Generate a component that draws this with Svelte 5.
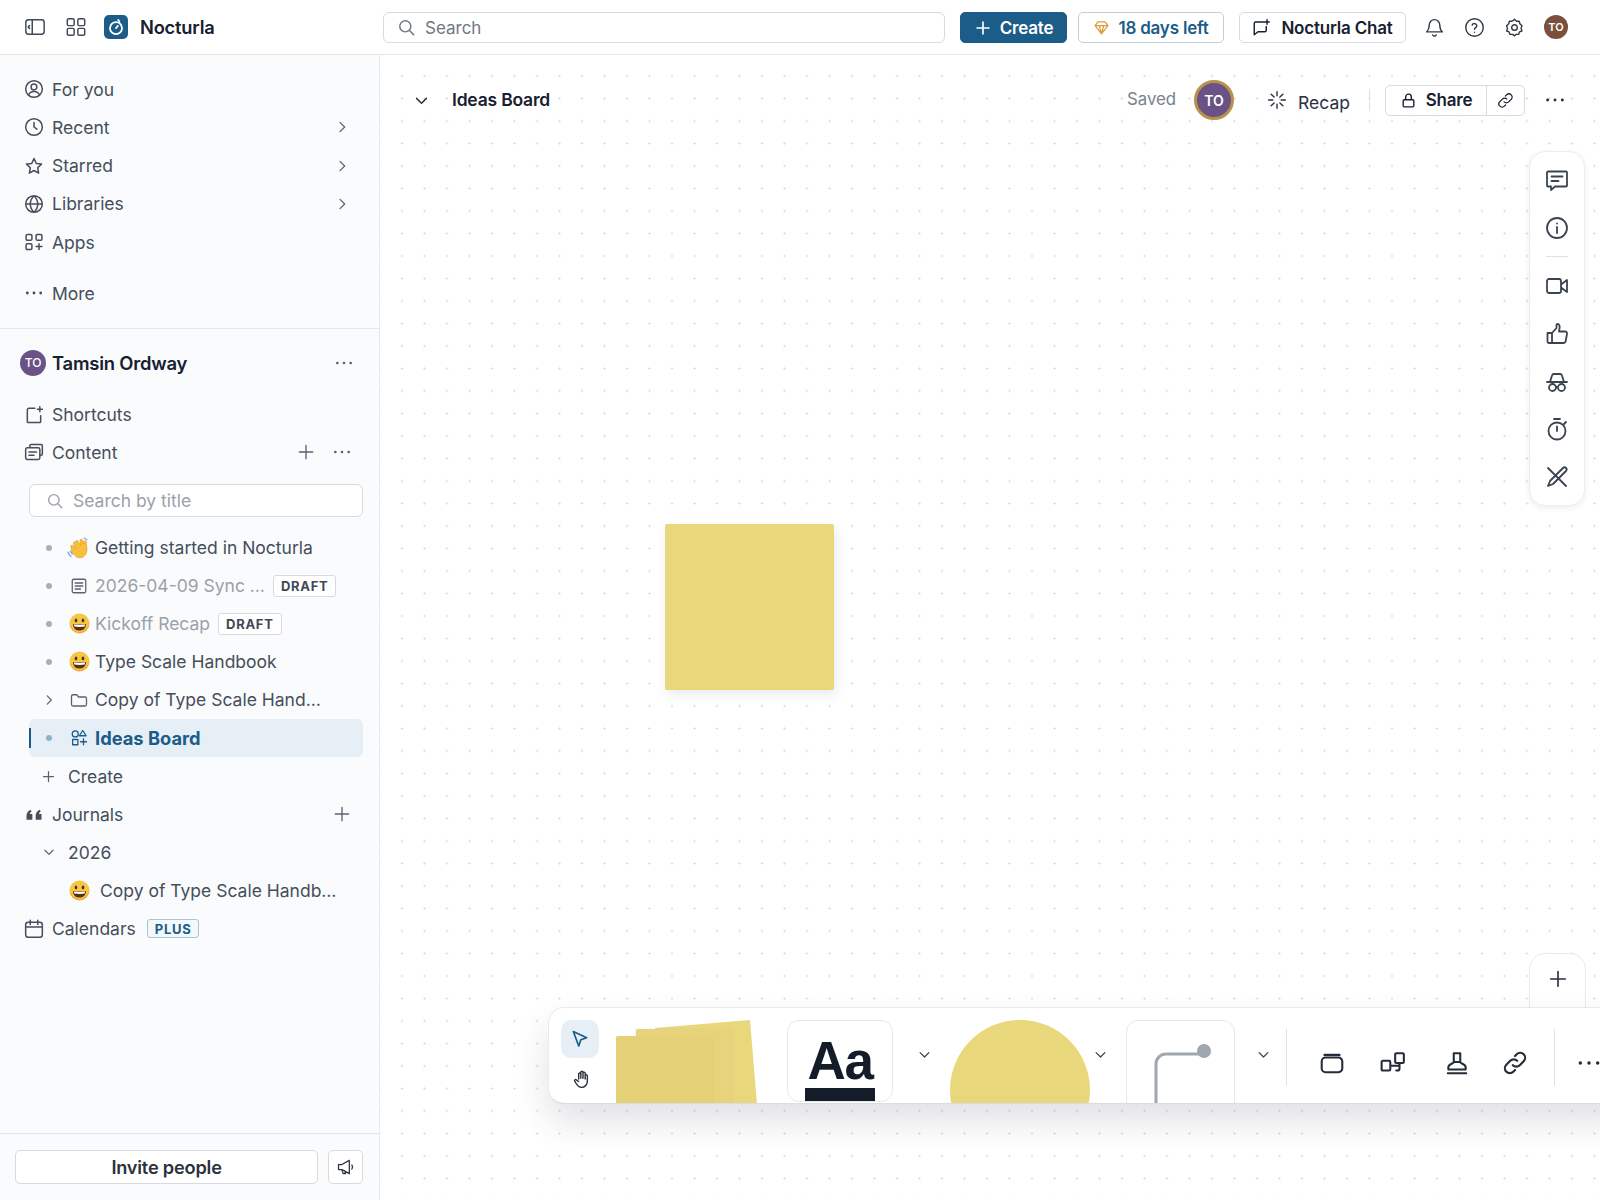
<script lang="ts">
  const c = (x: number, y: number, r: number) =>
    `M${x - r} ${y}a${r} ${r} 0 1 0 ${2 * r} 0a${r} ${r} 0 1 0 ${-2 * r} 0`;

  const icons: Record<string, string> = {
    panel: "M5 4h14a3 3 0 0 1 3 3v10a3 3 0 0 1-3 3H5a3 3 0 0 1-3-3V7a3 3 0 0 1 3-3z M9 4v16 M6 10.5 4.5 12 6 13.5",
    grid: "M4 3h4.5a1.5 1.5 0 0 1 1.5 1.5V9a1.5 1.5 0 0 1-1.5 1.5H4A1.5 1.5 0 0 1 2.500 9V4.500A1.500 1.500 0 0 1 4 3z M15.500 3H20a1.500 1.500 0 0 1 1.500 1.500V9a1.500 1.500 0 0 1-1.500 1.500h-4.500A1.500 1.500 0 0 1 14 9V4.500A1.500 1.500 0 0 1 15.500 3z M4 13.500h4.500A1.500 1.500 0 0 1 10 15v4.500A1.500 1.500 0 0 1 8.500 21H4a1.500 1.500 0 0 1-1.500-1.500V15A1.500 1.500 0 0 1 4 13.500z M15.500 13.500H20a1.500 1.500 0 0 1 1.500 1.500v4.500A1.500 1.500 0 0 1 20 21h-4.500a1.500 1.500 0 0 1-1.500-1.500V15a1.500 1.500 0 0 1 1.500-1.500z",
    search: c(10.5, 10.5, 7) + " M15.800 15.800 21 21",
    user: c(12, 12, 10) + c(12, 9.5, 3.5) + " M5.500 19.500c1-3 3.500-4.500 6.500-4.500s5.500 1.500 6.500 4.500",
    clock: c(12, 12, 10) + " M12 6.500V12l3.500 2.500",
    star: "M12 3l2.700 5.900 6.300.8-4.600 4.400 1.200 6.400L12 17.400l-5.600 3.100 1.200-6.400L3 9.700l6.300-.8z",
    globe: c(12, 12, 10) + " M2 12h20 M12 2c-6 6-6 14 0 20 M12 2c6 6 6 14 0 20",
    apps: "M4 3h4a1.500 1.500 0 0 1 1.500 1.500v4A1.500 1.500 0 0 1 8 10H4a1.500 1.500 0 0 1-1.500-1.500v-4A1.500 1.500 0 0 1 4 3z M16 3h4a1.500 1.500 0 0 1 1.500 1.500v4A1.500 1.500 0 0 1 20 10h-4a1.500 1.500 0 0 1-1.500-1.500v-4A1.500 1.500 0 0 1 16 3z M4 14h4a1.500 1.500 0 0 1 1.500 1.500v4A1.500 1.500 0 0 1 8 21H4a1.500 1.500 0 0 1-1.500-1.500v-4A1.500 1.500 0 0 1 4 14z M18 14v7 M14.500 17.500h7",
    more: "M4 12h.01 M12 12h.01 M20 12h.01",
    right: "M9 5l7 7-7 7",
    down: "M5 9l7 7 7-7",
    plus: "M12 4v16 M4 12h16",
    shortcut: "M13 4H6a2 2 0 0 0-2 2v14a1 1 0 0 0 1 1h14a1 1 0 0 0 1-1v-7 M19 2v6 M16 5h6",
    content: "M7 6V4.500A1.500 1.500 0 0 1 8.500 3h12A1.500 1.500 0 0 1 22 4.500v10a1.500 1.500 0 0 1-1.500 1.500H19 M4 7h13a2 2 0 0 1 2 2v10a2 2 0 0 1-2 2H4a2 2 0 0 1-2-2V9a2 2 0 0 1 2-2z M6 12h9 M6 16h6",
    page: "M5 3h14a2 2 0 0 1 2 2v14a2 2 0 0 1-2 2H5a2 2 0 0 1-2-2V5a2 2 0 0 1 2-2z M7 8h10 M7 12h10 M7 16h7",
    folder: "M4 5h5l2.500 3H20a2 2 0 0 1 2 2v8a2 2 0 0 1-2 2H4a2 2 0 0 1-2-2V7a2 2 0 0 1 2-2z",
    shapes: c(7, 6.500, 4) + " M17 2l4.500 7h-9z M3.500 14h7v7h-7z M18 13v8 M14 17h8",
    calendar: "M5 4h14a3 3 0 0 1 3 3v12a3 3 0 0 1-3 3H5a3 3 0 0 1-3-3V7a3 3 0 0 1 3-3z M2 9.500h20 M7.500 1.500v5 M16.500 1.500v5",
    gem: "M7 4h10l4 5.500L12 21 3 9.500z M3 9.500h18 M9 9.500 12 21l3-11.500",
    chat: "M19 4H5a2 2 0 0 0-2 2v15l5-4h9a2 2 0 0 0 2-2V10 M20 1v6 M17 4h6",
    bell: "M12 3a6 6 0 0 0-6 6c0 5-2 7-3 8h18c-1-1-3-3-3-8a6 6 0 0 0-6-6z M10 20.500a2.200 2.200 0 0 0 4 0",
    help: c(12, 12, 10) + " M9.300 9.300a2.800 2.800 0 0 1 5.400.7c0 2-2.700 2.300-2.700 4 M12 17.500h.01",
    gear: "M12 2.500l2.300 2.300h3l.9 3 2.300 2.200-1 3 1 3-2.800 1-1 2.900h-3L12 21.500l-2.200-1.600h-3l-1-2.900L3 16l1-3-1-3 2.300-2.200.9-3h3z" + c(12, 12, 3.200),
    spark: "M12 2v5 M12 17v5 M2 12h5 M17 12h5 M5 5l3.500 3.500 M15.500 15.500 19 19 M19 5l-3.500 3.500 M8.500 15.500 5 19",
    lock: "M6 11h12a1.500 1.500 0 0 1 1.500 1.500v7A1.500 1.500 0 0 1 18 21H6a1.500 1.500 0 0 1-1.500-1.500v-7A1.500 1.500 0 0 1 6 11z M8 11V7a4 4 0 0 1 8 0v4",
    link: "M10 14a4.500 4.500 0 0 0 6.400 0l3.600-3.600a4.500 4.500 0 0 0-6.400-6.400L12 5.600 M14 10a4.500 4.500 0 0 0-6.400 0L4 13.600a4.500 4.500 0 0 0 6.400 6.400l1.600-1.600",
    comment: "M3 3.500h18a1 1 0 0 1 1 1v13a1 1 0 0 1-1 1H10l-4 3.500v-3.500H3a1 1 0 0 1-1-1v-13a1 1 0 0 1 1-1z M6.500 8.500h11 M6.500 13h7",
    info: c(12, 12, 10) + " M12 11v6 M12 7.500h.01",
    video: "M4 5h10a2 2 0 0 1 2 2v10a2 2 0 0 1-2 2H4a2 2 0 0 1-2-2V7a2 2 0 0 1 2-2z M16 10.500 22 6v12l-6-4.500",
    thumb: "M2.500 11H7v10H4a1.500 1.500 0 0 1-1.500-1.500z M7 11l4.500-5V3a1 1 0 0 1 1-1c2 0 2.500 2.500 2 4.500L14 9.500h6a2 2 0 0 1 2 2.300l-1.300 7.400A2.200 2.200 0 0 1 18.500 21H7",
    incognito: "M2 12h20 M5 12l2-6.500A2 2 0 0 1 9 4h6a2 2 0 0 1 2 1.500L19 12" + c(7.500, 17.500, 3.500) + c(16.500, 17.500, 3.500) + " M11 17h2",
    timer: c(12, 14, 8.500) + " M9 2h6 M12 9.500V14 M18.500 7.500 21 5",
    nopen: "M3 3l18 18 M21 3c1 1 1 2 0 3L8 19l-5 2 2-5L18 3c1-1 2-1 3 0z",
    megaphone: "M3 9h4l9-5v16l-9-5H3z M7 15l1.500 5h3l-1.300-3.800 M19 9.500c1 1.500 1 3.500 0 5",
    hand: "M8 12V6a1.300 1.300 0 0 1 2.600 0v5 M10.600 11V4a1.300 1.300 0 0 1 2.600 0v7 M13.200 11V5a1.300 1.300 0 0 1 2.600 0v7 M15.800 12V8a1.300 1.300 0 0 1 2.600 0v7a7 7 0 0 1-7 7c-3 0-4.500-1.500-6-4l-2.200-3.500c-.7-1.300 1-2.500 2-1.400L8 15",
    frame: "M6 7h12a3.500 3.500 0 0 1 3.500 3.500V17a3.500 3.500 0 0 1-3.500 3.500H6A3.500 3.500 0 0 1 2.500 17v-6.500A3.500 3.500 0 0 1 6 7z M5 4.500h14",
    blocks: "M2.500 10h6a1 1 0 0 1 1 1v7a1 1 0 0 1-1 1h-6a1 1 0 0 1-1-1v-7a1 1 0 0 1 1-1z M15 3h6a1 1 0 0 1 1 1v7a1 1 0 0 1-1 1h-6a1 1 0 0 1-1-1V4a1 1 0 0 1 1-1z M9.500 14.500H17 M18 12v5a2 2 0 0 1-2 2h-1",
    stamp: "M9 3h6v8H9z M9 11c0 2-5 1.500-5 5v2h16v-2c0-3.500-5-3-5-5 M3.500 21.500h17",
    cursor: "M4 3l16 7.500-7 2.500-2.500 7.500z",
  };

  const nav = [
    { icon: "user", label: "For you" },
    { icon: "clock", label: "Recent", arrow: true },
    { icon: "star", label: "Starred", arrow: true },
    { icon: "globe", label: "Libraries", arrow: true },
    { icon: "apps", label: "Apps" },
  ];

  const tree = [
    { lead: "dot", emoji: "wave", label: "Getting started in Nocturla" },
    { lead: "dot", icon: "page", label: "2026-04-09 Sync …", draft: true },
    { lead: "dot", emoji: "grin", label: "Kickoff Recap", draft: true },
    { lead: "dot", emoji: "grin", label: "Type Scale Handbook" },
    { lead: "arrow", icon: "folder", label: "Copy of Type Scale Hand…" },
    { lead: "dot", icon: "shapes", label: "Ideas Board", active: true },
  ];

  const rail = ["comment", "info", "-", "video", "thumb", "incognito", "timer", "nopen"];
</script>

{#snippet ico(name: string, size = 20, sw = 1.8)}
  <svg class="ico" width={size} height={size} viewBox="0 0 24 24" fill="none" stroke="currentColor" stroke-width={sw} stroke-linecap="round" stroke-linejoin="round">
    <path d={icons[name]} />
  </svg>
{/snippet}

{#snippet grin()}
  <svg class="emoji" width="21" height="21" viewBox="0 0 24 24">
    <circle cx="12" cy="12" r="11.500" fill="#f7c744" />
    <path d="M1 12a11 11 0 0 0 22 0c-2 7-7 10-11 10S3 19 1 12z" fill="#ec9a30" />
    <ellipse cx="8" cy="8.500" rx="1.500" ry="2.200" fill="#4a3420" />
    <ellipse cx="16" cy="8.500" rx="1.500" ry="2.200" fill="#4a3420" />
    <path d="M4.500 12.500c4.500 1 10.500 1 15 0 0 5-3.500 7.500-7.500 7.500s-7.500-2.500-7.500-7.500z" fill="#5a2f18" />
    <path d="M5.500 13.200c4 .7 9 .7 13 0l-.5 2.300c-4 .6-8 .6-12 0z" fill="#fff" />
  </svg>
{/snippet}

{#snippet wave()}
  <svg class="emoji" width="24" height="24" viewBox="0 0 24 24">
    <path d="M9 5c1-1 2 0 2.500 1l2 3.500-.5-5c0-1.500 2-1.800 2.500-.3l1 4.300.3-2.800c.2-1.500 2.200-1.300 2.300.2.400 4 1.400 7.500.4 10.600-1.200 4-5 6-8.500 5-3-.9-4.500-3.500-6-6L4 11c-.8-1.300 1-2.500 2-1.300l2.500 3L6.500 7.500C6 6 8 5 9 6.500z" fill="#f8c03a" stroke="#e29a26" stroke-width=".7" />
    <path d="M1 16c.5 2 1.500 3.500 3 4.500 M3.500 15c.4 1.200 1 2.200 1.800 3" stroke="#6aa5d8" stroke-width="1.200" fill="none" stroke-linecap="round" />
    <path d="M17 2c1 .2 2 .8 2.800 1.800" stroke="#6aa5d8" stroke-width="1.200" fill="none" stroke-linecap="round" />
  </svg>
{/snippet}

<div class="page">
  <header class="topbar">
    <div class="brand">
      <span class="brand-ico">{@render ico("panel", 22, 1.6)}</span>
      <span class="brand-ico grid">{@render ico("grid", 22, 1.6)}</span>
      <span class="logo">
        <svg width="18" height="18" viewBox="0 0 24 24" fill="none" stroke="#fff" stroke-width="2.400" stroke-linecap="round">
          <circle cx="12" cy="13.500" r="8" />
          <path d="M12 13.500l2.500-3 M15 2.500l1.500 2.500" />
        </svg>
      </span>
      <span class="brand-name">Nocturla</span>
    </div>
    <div class="search">
      {@render ico("search", 19, 1.8)}
      <span>Search</span>
    </div>
    <button class="btn primary">{@render ico("plus", 18, 2.2)}Create</button>
    <button class="btn trial">
      <span class="gem">{@render ico("gem", 17, 1.8)}</span>18 days left
    </button>
    <button class="btn chat">{@render ico("chat", 18, 1.9)}Nocturla Chat</button>
    <div class="top-icons">
      {@render ico("bell", 21, 1.6)}
      {@render ico("help", 21, 1.6)}
      {@render ico("gear", 21, 1.6)}
      <span class="avatar brown">TO</span>
    </div>
  </header>

  <div class="body">
    <aside class="sidebar">
      <nav class="nav">
        {#each nav as item}
          <div class="row">
            {@render ico(item.icon)}
            <span class="label">{item.label}</span>
            {#if item.arrow}<span class="arrow">{@render ico("right", 16, 1.8)}</span>{/if}
          </div>
        {/each}
        <div class="row more-row">
          {@render ico("more", 20, 3.400)}
          <span class="label">More</span>
        </div>
      </nav>

      <section class="space">
        <div class="owner">
          <span class="avatar purple">TO</span>
          <strong>Tamsin Ordway</strong>
          <span class="owner-more">{@render ico("more", 20, 3.200)}</span>
        </div>
        <div class="row shortcuts">
          {@render ico("shortcut")}
          <span class="label">Shortcuts</span>
        </div>
        <div class="row content-row">
          {@render ico("content")}
          <span class="label">Content</span>
          <span class="row-actions">
            {@render ico("plus", 20, 1.6)}
            {@render ico("more", 20, 3.200)}
          </span>
        </div>
        <div class="title-search">
          {@render ico("search", 18, 1.8)}
          <span>Search by title</span>
        </div>

        <div class="tree">
          {#each tree as node}
            <div class="node" class:active={node.active}>
              <span class="lead">
                {#if node.lead === "dot"}<i class="dot"></i>{:else}{@render ico("right", 14, 2)}{/if}
              </span>
              <span class="node-ico">
                {#if node.emoji === "grin"}{@render grin()}
                {:else if node.emoji === "wave"}{@render wave()}
                {:else}{@render ico(node.icon ?? "page", 18, 1.7)}{/if}
              </span>
              <span class="label" class:faded={node.draft}>{node.label}</span>
              {#if node.draft}<span class="tag">DRAFT</span>{/if}
            </div>
          {/each}
          <div class="node create">
            <span class="lead">{@render ico("plus", 15, 2)}</span>
            <span class="label">Create</span>
          </div>
        </div>

        <div class="row">
          <svg class="ico" width="20" height="20" viewBox="0 0 24 24" fill="currentColor">
            <path d="M3 19v-5c0-3 2-6 5-7l1 2c-1 .6-2 1.600-2 3h3v7zM14 19v-5c0-3 2-6 5-7l1 2c-1 .6-2 1.600-2 3h3v7z" />
          </svg>
          <span class="label">Journals</span>
          <span class="row-actions">{@render ico("plus", 20, 1.6)}</span>
        </div>
        <div class="node create">
          <span class="lead">{@render ico("down", 14, 2)}</span>
          <span class="label">2026</span>
        </div>
        <div class="node journal">
          <span class="node-ico">{@render grin()}</span>
          <span class="label">Copy of Type Scale Handb…</span>
        </div>
        <div class="row">
          {@render ico("calendar")}
          <span class="label">Calendars</span>
          <span class="tag plus">PLUS</span>
        </div>
      </section>

      <footer class="invite">
        <button class="invite-btn">Invite people</button>
        <button class="megaphone">{@render ico("megaphone", 20, 1.5)}</button>
      </footer>
    </aside>

    <main class="canvas">
      <div class="doc-head">
        <span class="doc-arrow">{@render ico("down", 17, 2)}</span>
        <strong class="doc-title">Ideas Board</strong>
        <span class="saved">Saved</span>
        <span class="avatar ringed">TO</span>
        <span class="recap">{@render ico("spark", 20, 1.7)}<span>Recap</span></span>
        <i class="vline"></i>
        <div class="share">
          <span class="share-main">{@render ico("lock", 17, 1.9)}Share</span>
          <span class="share-link">{@render ico("link", 17, 1.8)}</span>
        </div>
        <span class="doc-more">{@render ico("more", 22, 3.200)}</span>
      </div>

      <div class="sticky"></div>

      <div class="rail">
        {#each rail as r}
          {#if r === "-"}<i class="rail-sep"></i>{:else}<span class="rail-ico">{@render ico(r, 24, 1.8)}</span>{/if}
        {/each}
      </div>

      <div class="zoom-tab">{@render ico("plus", 22, 1.8)}</div>

      <div class="toolbar">
        <div class="tools">
          <span class="tool on">{@render ico("cursor", 20, 2)}</span>
          <span class="tool">{@render ico("hand", 20, 1.7)}</span>
        </div>
        <div class="stack">
          <i class="note back"></i>
          <i class="note mid"></i>
          <i class="note front"></i>
        </div>
        <div class="card text-card">
          <span class="aa">Aa</span>
          <i class="aa-bar"></i>
        </div>
        <span class="chev c1">{@render ico("down", 15, 2)}</span>
        <i class="shape"></i>
        <span class="chev c2">{@render ico("down", 15, 2)}</span>
        <div class="card line-card">
          <svg width="109" height="84" viewBox="0 0 109 84" fill="none">
            <path d="M30 84V44a10 10 0 0 1 10-10h38" stroke="#a0a7b0" stroke-width="3" />
            <circle cx="78" cy="31" r="7" fill="#a0a7b0" />
          </svg>
        </div>
        <span class="chev c3">{@render ico("down", 15, 2)}</span>
        <i class="tb-sep"></i>
        <span class="tb-ico t1">{@render ico("frame", 26, 1.9)}</span>
        <span class="tb-ico t2">{@render ico("blocks", 26, 1.9)}</span>
        <span class="tb-ico t3">{@render ico("stamp", 26, 1.9)}</span>
        <span class="tb-ico t4">{@render ico("link", 26, 2)}</span>
        <i class="tb-sep second"></i>
        <span class="tb-ico t5">{@render ico("more", 26, 3.200)}</span>
      </div>
    </main>
  </div>
</div>

<style>
  :global(body) {
    margin: 0;
    font-family: Inter, "Liberation Sans", sans-serif;
    color: #172030;
  }
  .page {
    width: 1600px;
    height: 1200px;
    overflow: hidden;
    display: flex;
    flex-direction: column;
    background: #fff;
  }
  .ico {
    display: block;
    flex: none;
  }
  i {
    display: block;
  }

  .topbar {
    height: 54px;
    flex: none;
    border-bottom: 1px solid #e4e6e9;
    display: flex;
    align-items: center;
  }
  .brand {
    width: 383px;
    flex: none;
    display: flex;
    align-items: center;
    padding-left: 24px;
    box-sizing: border-box;
    color: #3f4956;
  }
  .brand-ico.grid {
    margin-left: 19px;
  }
  .logo {
    width: 24px;
    height: 24px;
    margin-left: 17px;
    border-radius: 5px;
    background: #1b5c88;
    display: flex;
    align-items: center;
    justify-content: center;
  }
  .brand-name {
    margin-left: 12px;
    font-size: 18.300px;
    font-weight: 600;
    color: #172030;
    letter-spacing: -0.2px;
  }
  .search {
    width: 562px;
    height: 31px;
    margin-top: 1px;
    box-sizing: border-box;
    border: 1px solid #d7dade;
    border-radius: 6px;
    display: flex;
    align-items: center;
    gap: 9px;
    padding-left: 13px;
    color: #6f7783;
    font-size: 17px;
  }
  .btn {
    height: 31px;
    box-sizing: border-box;
    border-radius: 5px;
    border: 1px solid #d7dade;
    background: #fff;
    display: flex;
    align-items: center;
    justify-content: center;
    font: 600 17px Inter, "Liberation Sans", sans-serif;
    letter-spacing: -0.2px;
    color: #172030;
    padding: 1px 0 0;
  }
  .primary {
    width: 107px;
    margin-left: 15px;
    gap: 8px;
    background: #1b5c88;
    border-color: #1b5c88;
    color: #fff;
  }
  .trial {
    width: 146px;
    margin-left: 11px;
    gap: 8px;
    color: #1b5c88;
    border-color: #bfcfdc;
  }
  .gem {
    color: #d99f3c;
  }
  .chat {
    width: 167px;
    margin-left: 15px;
    gap: 11px;
  }
  .top-icons {
    display: flex;
    align-items: center;
    gap: 19px;
    margin-left: 18px;
    color: #2f3844;
  }
  .avatar {
    border-radius: 50%;
    color: #fff;
    display: flex;
    align-items: center;
    justify-content: center;
    font-weight: 600;
    flex: none;
  }
  .brown {
    width: 24px;
    height: 24px;
    background: #7b4f3b;
    font-size: 11px;
  }
  .purple {
    width: 26px;
    height: 26px;
    background: #6a5287;
    font-size: 12px;
    font-weight: 500;
  }
  .ringed {
    width: 40px;
    height: 40px;
    box-sizing: border-box;
    background: #6a5287;
    border: 3px solid #b8924a;
    font-size: 14px;
    margin-left: 18px;
  }

  .body {
    flex: 1;
    display: flex;
    min-height: 0;
  }
  .sidebar {
    width: 380px;
    flex: none;
    box-sizing: border-box;
    background: #f9fbfd;
    border-right: 1px solid #e8eaed;
    display: flex;
    flex-direction: column;
    color: #454e5b;
    font-size: 17.500px;
  }
  .nav {
    padding: 15px 0 15px;
    border-bottom: 1px solid #e4e6e9;
  }
  .row {
    height: 38.250px;
    display: flex;
    align-items: center;
    padding: 0 24px;
    gap: 8px;
  }
  .nav .row {
    padding-right: 29px;
  }
  .more-row {
    margin-top: 13px;
  }
  .arrow {
    margin-left: auto;
    color: #596270;
  }
  .space {
    flex: 1;
    padding-top: 17px;
  }
  .owner {
    height: 34px;
    display: flex;
    align-items: center;
    padding: 0 25px 0 20px;
    gap: 6px;
    margin-bottom: 16px;
  }
  .owner strong {
    font-size: 18.400px;
    font-weight: 600;
    letter-spacing: -0.2px;
    color: #172030;
  }
  .owner-more {
    margin-left: auto;
    color: #596270;
  }
  .shortcuts {
    height: 38px;
  }
  .content-row {
    height: 37.500px;
  }
  .row-actions {
    margin-left: auto;
    display: flex;
    gap: 16px;
    color: #596270;
    margin-right: 3px;
  }
  .title-search {
    margin: 12.500px 16px 12px 29px;
    height: 33px;
    box-sizing: border-box;
    background: #fff;
    border: 1px solid #d7dade;
    border-radius: 6px;
    display: flex;
    align-items: center;
    gap: 9px;
    padding: 1px 0 0 16px;
    color: #9aa1aa;
  }
  .node {
    height: 38.100px;
    margin: 0 16px 0 29px;
    display: flex;
    align-items: center;
    border-radius: 6px;
    position: relative;
  }
  .lead {
    width: 39px;
    flex: none;
    display: flex;
    justify-content: center;
    color: #596270;
  }
  .dot {
    width: 6px;
    height: 6px;
    border-radius: 50%;
    background: #a9afb7;
  }
  .node-ico {
    width: 22px;
    margin-right: 5px;
    flex: none;
    display: flex;
    justify-content: center;
    color: #596270;
  }
  .node-ico .emoji {
    display: block;
    flex: none;
  }
  .faded {
    color: #9aa1aa;
  }
  .tag {
    margin-left: 11px;
    height: 20px;
    padding: 0 7px;
    border: 1px solid #d7dade;
    border-radius: 3px;
    background: #fff;
    display: flex;
    align-items: center;
    font-size: 13px;
    font-weight: 700;
    letter-spacing: 0.7px;
    color: #3f4956;
  }
  .node .tag {
    margin-left: 8px;
  }
  .tag.plus {
    margin-left: 3px;
    height: 17px;
    color: #1b5c88;
    border-color: #a9c4d8;
    background: #f3f8fb;
  }
  .active {
    background: #e7eff6;
    color: #1b5c88;
    font-weight: 700;
    font-size: 18.300px;
  }
  .active::before {
    content: "";
    position: absolute;
    left: 0;
    top: 9px;
    bottom: 9px;
    width: 2px;
    background: #1b5c88;
  }
  .active .dot {
    background: #8db2cc;
  }
  .active .node-ico {
    color: #1b5c88;
  }
  .journal {
    padding-left: 39px;
  }
  .journal .node-ico {
    margin-right: 10px;
  }

  .invite {
    height: 67px;
    flex: none;
    box-sizing: border-box;
    border-top: 1px solid #e4e6e9;
    padding: 16px 16px 0 15px;
    display: flex;
    gap: 10px;
  }
  .invite button {
    height: 34px;
    box-sizing: border-box;
    background: #fff;
    border: 1px solid #d7dade;
    border-radius: 5px;
    color: #2a323e;
    padding: 0;
  }
  .invite-btn {
    width: 304px;
    font: 600 18.200px Inter, "Liberation Sans", sans-serif;
    letter-spacing: -0.2px;
  }
  .megaphone {
    width: 35px;
    display: flex;
    align-items: center;
    justify-content: center;
  }

  .canvas {
    flex: 1;
    position: relative;
    overflow: hidden;
    background-color: #fff;
    background-image: radial-gradient(circle at center, #d9dce0 0, #d9dce0 0.900px, transparent 1.200px);
    background-size: 22.500px 22.500px;
    background-position: 10.750px 9.750px;
  }
  .doc-head {
    display: flex;
    align-items: center;
    height: 40px;
    margin-top: 25px;
    padding: 0 34px 0 33px;
  }
  .doc-arrow {
    color: #2a323e;
  }
  .doc-title {
    margin: 0 0 2px 22px;
    font-size: 17.500px;
    font-weight: 600;
    letter-spacing: -0.2px;
  }
  .saved {
    margin: 0 0 2px auto;
    color: #7a828d;
    font-size: 16.800px;
  }
  .recap {
    display: flex;
    align-items: center;
    gap: 11px;
    margin-left: 33px;
    font-size: 17.500px;
    color: #2a323e;
  }
  .recap span {
    margin-top: 4px;
  }
  .vline {
    width: 1px;
    height: 22px;
    background: #dfe2e5;
    margin-left: 19px;
  }
  .share {
    margin-left: 15px;
    width: 140px;
    height: 31px;
    box-sizing: border-box;
    display: flex;
    background: #fff;
    border: 1px solid #d7dade;
    border-radius: 5px;
    font-size: 17px;
    font-weight: 600;
    letter-spacing: -0.2px;
  }
  .share-main {
    flex: 1;
    display: flex;
    align-items: center;
    justify-content: center;
    gap: 9px;
    border-right: 1px solid #d7dade;
  }
  .share-link {
    width: 37px;
    display: flex;
    align-items: center;
    justify-content: center;
  }
  .doc-more {
    margin-left: 19px;
    color: #2a323e;
  }
  .sticky {
    position: absolute;
    left: 285px;
    top: 469px;
    width: 169px;
    height: 166px;
    border-radius: 2px;
    background: #e9d87b;
    box-shadow: 2px 4px 12px rgba(60, 70, 90, 0.12);
  }
  .rail {
    position: absolute;
    right: 15px;
    top: 96px;
    width: 56px;
    height: 355px;
    box-sizing: border-box;
    padding-top: 4px;
    background: #fff;
    border: 1px solid #eceef0;
    border-radius: 16px;
    box-shadow: 0 2px 6px rgba(30, 40, 60, 0.08);
    display: flex;
    flex-direction: column;
    align-items: center;
    color: #3a4350;
  }
  .rail-ico {
    height: 47.700px;
    flex: none;
    display: flex;
    align-items: center;
  }
  .rail-sep {
    width: 22px;
    height: 1px;
    background: #dfe2e5;
    margin: 5px 0 5px;
  }
  .zoom-tab {
    position: absolute;
    right: 14px;
    top: 898px;
    width: 57px;
    height: 70px;
    box-sizing: border-box;
    padding-top: 14px;
    background: #fff;
    border: 1px solid #e8eaed;
    border-radius: 16px;
    display: flex;
    justify-content: center;
    color: #2a323e;
  }
  .toolbar {
    position: absolute;
    left: 168px;
    top: 952px;
    width: 1100px;
    height: 97px;
    box-sizing: border-box;
    background: #fff;
    border: 1px solid #e8eaed;
    border-bottom-color: #d9dce0;
    border-radius: 16px;
    box-shadow: 0 18px 34px rgba(40, 50, 70, 0.14);
    display: flex;
    align-items: flex-start;
    overflow: hidden;
    color: #232c39;
  }
  .tools {
    width: 38px;
    margin: 12px 0 0 12px;
    flex: none;
  }
  .tool {
    width: 38px;
    height: 38px;
    border-radius: 10px;
    display: flex;
    align-items: center;
    justify-content: center;
    color: #2a323e;
  }
  .tool.on {
    background: #e7eff6;
    color: #1b5c88;
  }
  .tool + .tool {
    margin: 2px 0 0 2px;
  }
  .stack {
    position: relative;
    width: 141px;
    height: 84px;
    margin: 12px 0 0 17px;
    flex: none;
  }
  .note {
    position: absolute;
    bottom: 0;
  }
  .note.back {
    left: 39px;
    top: 0;
    width: 102px;
    height: 84px;
    background: #e9d77b;
    clip-path: polygon(0 8px, 95px 0, 102px 84px, 0 84px);
  }
  .note.mid {
    left: 20px;
    top: 9px;
    width: 98px;
    background: #e6d37c;
    border-radius: 2px 2px 0 0;
    box-shadow: -1px 0 2px rgba(180, 150, 60, 0.12);
  }
  .note.front {
    left: 0;
    top: 16px;
    width: 98px;
    background: #e3d077;
    border-radius: 2px 2px 0 0;
  }
  .card {
    height: 96px;
    box-sizing: border-box;
    border: 1px solid #e6e8eb;
    border-radius: 12px;
    margin-top: 12px;
    flex: none;
    position: relative;
    background: #fff;
  }
  .text-card {
    width: 106px;
    margin-left: 30px;
    height: 82px;
    display: flex;
    flex-direction: column;
    align-items: center;
  }
  .aa {
    font: 700 53px/1 "Liberation Sans", sans-serif;
    letter-spacing: -1.500px;
    color: #131c28;
    margin-top: 13px;
  }
  .aa-bar {
    width: 70px;
    height: 13px;
    background: #131c28;
    margin-top: 1px;
  }
  .chev {
    width: 15px;
    margin-top: 39px;
    color: #3a4350;
    flex: none;
  }
  .c1 {
    margin-left: 24px;
  }
  .c2 {
    margin-left: 3px;
  }
  .c3 {
    margin-left: 21px;
  }
  .shape {
    width: 140px;
    height: 140px;
    border-radius: 50%;
    background: #e9d87b;
    margin: 12px 0 0 18px;
    flex: none;
  }
  .line-card {
    width: 109px;
    margin-left: 18px;
  }
  .line-card svg {
    display: block;
    position: absolute;
    left: -1px;
    top: -1px;
  }
  .tb-sep {
    width: 1px;
    height: 57px;
    background: #dfe2e5;
    margin: 21px 0 0 15px;
    flex: none;
  }
  .tb-ico {
    width: 26px;
    margin-top: 42px;
    flex: none;
  }
  .t1 {
    margin-left: 32px;
  }
  .t2 {
    margin-left: 35px;
  }
  .t3 {
    margin-left: 38px;
  }
  .t4 {
    margin-left: 32px;
  }
  .tb-sep.second {
    margin-left: 26px;
  }
  .t5 {
    margin-left: 21px;
  }
</style>
